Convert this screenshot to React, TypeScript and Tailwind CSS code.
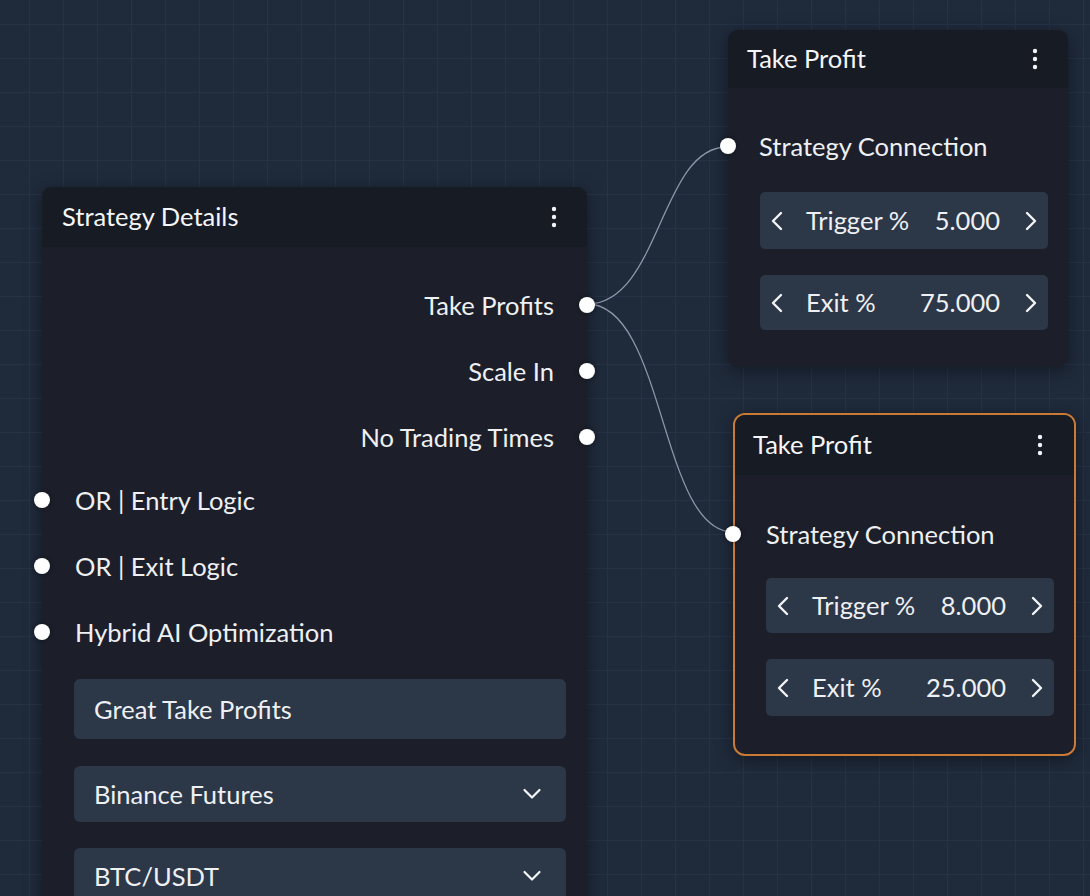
import React from "react";

const font = { fontFamily: "Lato, 'Noto Sans', sans-serif" };

function Kebab() {
  return (
    <svg width="6" height="22" viewBox="0 0 6 22" className="block">
      <circle cx="3" cy="3" r="2.2" fill="#f3f4f6" />
      <circle cx="3" cy="11" r="2.2" fill="#f3f4f6" />
      <circle cx="3" cy="19" r="2.2" fill="#f3f4f6" />
    </svg>
  );
}

function ChevL() {
  return (
    <svg width="16" height="22" viewBox="0 0 16 22" className="block">
      <path d="M12 3 L4 11 L12 19" fill="none" stroke="#f3f4f6" strokeWidth="2.4" strokeLinecap="round" strokeLinejoin="round" />
    </svg>
  );
}

function ChevR() {
  return (
    <svg width="16" height="22" viewBox="0 0 16 22" className="block">
      <path d="M4 3 L12 11 L4 19" fill="none" stroke="#f3f4f6" strokeWidth="2.4" strokeLinecap="round" strokeLinejoin="round" />
    </svg>
  );
}

function ChevDown() {
  return (
    <svg width="20" height="12" viewBox="0 0 20 12" className="block">
      <path d="M2.5 2 L10 9.5 L17.5 2" fill="none" stroke="#f3f4f6" strokeWidth="2.2" strokeLinecap="round" strokeLinejoin="round" />
    </svg>
  );
}

function Dot({ side }: { side: "left" | "right" }) {
  const pos = side === "right" ? "right-[-8px]" : "left-[-8px]";
  return (
    <span
      className={`absolute ${pos} top-1/2 -translate-y-1/2 w-[16px] h-[16px] rounded-full bg-white shadow-[0_0_4px_rgba(0,0,0,0.45)]`}
    />
  );
}

function Stepper({ label, value, h }: { label: string; value: string; h: string }) {
  return (
    <div className={`flex items-center ${h} rounded-[5px] bg-[#2c3748] text-[25.5px] text-[#eef0f3]`}>
      <div className="w-[34px] flex justify-center">
        <ChevL />
      </div>
      <span className="ml-[12px]">{label}</span>
      <span className="flex-1 text-right mr-[14px]">{value}</span>
      <div className="w-[34px] flex justify-center">
        <ChevR />
      </div>
    </div>
  );
}

export default function App() {
  return (
    <div
      style={font}
      className="relative w-[1090px] h-[896px] overflow-hidden bg-[#1f2a3b] bg-[linear-gradient(to_right,#263246_1.5px,transparent_1.5px),linear-gradient(to_bottom,#263246_1.5px,transparent_1.5px)] bg-[size:34px_34px] bg-[position:29px_24px]"
    >
      {/* edges */}
      <svg className="absolute inset-0" width="1090" height="896">
        <path d="M587 304 C 660 304, 660 147, 727 147" fill="none" stroke="#8d97aa" strokeWidth="1.3" />
        <path d="M587 304 C 665 304, 660 532, 733 532" fill="none" stroke="#8d97aa" strokeWidth="1.3" />
      </svg>

      {/* Strategy Details node */}
      <div className="absolute left-[42px] top-[187px] w-[545px] h-[780px] rounded-[10px] bg-[#1c1f2a] shadow-[0_4px_18px_rgba(0,0,0,0.4)]">
        <div className="h-[60px] rounded-t-[10px] bg-[#171b24] flex items-center justify-between pl-[20px] pr-[30px]">
          <span className="text-[25.5px] text-[#f5f6f8] mt-[-1px]">Strategy Details</span>
          <Kebab />
        </div>
        <div className="pt-[25px] text-[25.5px] text-[#eef0f3]">
          {["Take Profits", "Scale In", "No Trading Times"].map((t) => (
            <div key={t} className="relative h-[66px] flex items-center justify-end pr-[33px]">
              <span>{t}</span>
              <Dot side="right" />
            </div>
          ))}
          <div className="mt-[-3px]">
            {["OR | Entry Logic", "OR | Exit Logic", "Hybrid AI Optimization"].map((t) => (
              <div key={t} className="relative h-[66px] flex items-center pl-[33px]">
                <span>{t}</span>
                <Dot side="left" />
              </div>
            ))}
          </div>
          <div className="pl-[32px] pr-[21px]">
            <div className="mt-[14px] h-[60px] rounded-[6px] bg-[#2c3748] flex items-center px-[20px]">
              Great Take Profits
            </div>
            <div className="mt-[27px] h-[56px] rounded-[6px] bg-[#2c3748] flex items-center justify-between pl-[20px] pr-[24px]">
              <span>Binance Futures</span>
              <ChevDown />
            </div>
            <div className="mt-[26px] h-[56px] rounded-[6px] bg-[#2c3748] flex items-center justify-between pl-[20px] pr-[24px]">
              <span>BTC/USDT</span>
              <ChevDown />
            </div>
          </div>
        </div>
      </div>

      {/* Take Profit node 1 */}
      <div className="absolute left-[728px] top-[30px] w-[340px] h-[337px] rounded-[10px] bg-[#1c1f2a] shadow-[0_4px_18px_rgba(0,0,0,0.4)]">
        <div className="h-[58px] rounded-t-[10px] bg-[#171b24] flex items-center justify-between pl-[19px] pr-[30px]">
          <span className="text-[25.5px] text-[#f5f6f8] mt-[-1px]">Take Profit</span>
          <Kebab />
        </div>
        <div className="pt-[43px] pl-[32px] pr-[20px]">
          <div className="relative h-[30px] flex items-center text-[25.5px] text-[#eef0f3] ml-[-1px]">
            <span>Strategy Connection</span>
            <span className="absolute left-[-39px] top-1/2 -translate-y-1/2 w-[16px] h-[16px] rounded-full bg-white shadow-[0_0_4px_rgba(0,0,0,0.45)]" />
          </div>
          <div className="mt-[31px]">
            <Stepper label="Trigger %" value="5.000" h="h-[57px]" />
          </div>
          <div className="mt-[26px]">
            <Stepper label="Exit %" value="75.000" h="h-[55px]" />
          </div>
        </div>
      </div>

      {/* Take Profit node 2 (selected) */}
      <div className="absolute left-[733px] top-[413px] w-[343px] h-[343px] rounded-[12px] border-2 border-[#c97a35] bg-[#1c1f2a] shadow-[0_4px_18px_rgba(0,0,0,0.4)]">
        <div className="h-[60px] rounded-t-[10px] bg-[#171b24] flex items-center justify-between pl-[18px] pr-[31px]">
          <span className="text-[25.5px] text-[#f5f6f8] mt-[-1px]">Take Profit</span>
          <Kebab />
        </div>
        <div className="pt-[44px] pl-[31px] pr-[20px]">
          <div className="relative h-[30px] flex items-center text-[25.5px] text-[#eef0f3]">
            <span>Strategy Connection</span>
            <span className="absolute left-[-41px] top-1/2 -translate-y-1/2 w-[16px] h-[16px] rounded-full bg-white shadow-[0_0_4px_rgba(0,0,0,0.45)]" />
          </div>
          <div className="mt-[29px]">
            <Stepper label="Trigger %" value="8.000" h="h-[55px]" />
          </div>
          <div className="mt-[26px]">
            <Stepper label="Exit %" value="25.000" h="h-[57px]" />
          </div>
        </div>
      </div>
    </div>
  );
}
